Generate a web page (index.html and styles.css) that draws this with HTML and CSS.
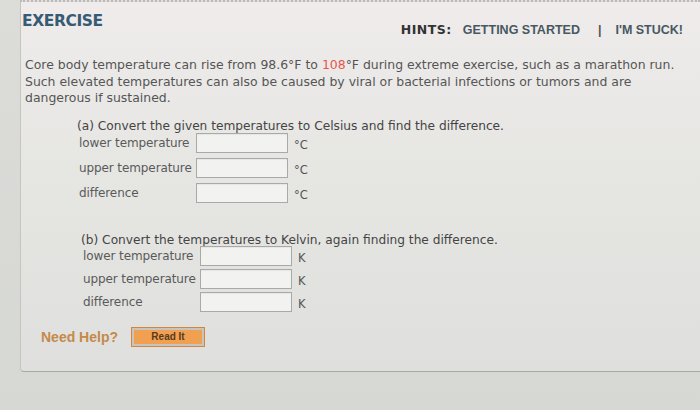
FILE: index.html
```html
<!DOCTYPE html>
<html>
<head>
<meta charset="utf-8">
<link rel="stylesheet" href="styles.css">
</head>
<body>
<div class="panel">
  <div class="topbar">
    <div class="title">EXERCISE</div>
    <div class="hints">
      <span class="hints-label">HINTS:</span>
      <span class="hint-link">GETTING STARTED</span>
      <span class="sep">|</span>
      <span class="hint-link">I'M STUCK!</span>
    </div>
  </div>
  <div class="intro">
    <div class="line">Core body temperature can rise from 98.6°F to <span class="red">108</span>°F during extreme exercise, such as a marathon run.</div>
    <div class="line">Such elevated temperatures can also be caused by viral or bacterial infections or tumors and are</div>
    <div class="line">dangerous if sustained.</div>
  </div>

  <div class="part part-a">
    <div class="q">(a) Convert the given temperatures to Celsius and find the difference.</div>
    <div class="rows">
      <div class="row"><span class="lbl">lower temperature</span><span class="box"></span><span class="unit">°C</span></div>
      <div class="row"><span class="lbl">upper temperature</span><span class="box"></span><span class="unit">°C</span></div>
      <div class="row"><span class="lbl">difference</span><span class="box"></span><span class="unit">°C</span></div>
    </div>
  </div>

  <div class="part part-b">
    <div class="q">(b) Convert the temperatures to Kelvin, again finding the difference.</div>
    <div class="rows rows-b">
      <div class="row"><span class="lbl">lower temperature</span><span class="box"></span><span class="unit">K</span></div>
      <div class="row"><span class="lbl">upper temperature</span><span class="box"></span><span class="unit">K</span></div>
      <div class="row"><span class="lbl">difference</span><span class="box"></span><span class="unit">K</span></div>
    </div>
  </div>

  <div class="help">
    <span class="need">Need Help?</span>
    <span class="readit">Read It</span>
  </div>
</div>
</body>
</html>
```
FILE: styles.css
```css
html, body {
  margin: 0;
  padding: 0;
}
body {
  width: 700px;
  height: 410px;
  overflow: hidden;
  background: linear-gradient(180deg, #dcdcd9 0%, #d6d8d4 100%);
  font-family: "DejaVu Sans", Verdana, sans-serif;
  color: #555555;
}
.panel {
  margin-left: 20px;
  height: 372px;
  box-sizing: border-box;
  border-left: 1px solid #c4c4c0;
  border-bottom: 1px solid #a8aaa6;
  border-top: 2px dotted #bdb9b8;
  border-bottom-left-radius: 4px;
  background: linear-gradient(180deg, #efeceb 0%, #e6e6e3 45%, #dfe0dd 100%);
  padding-top: 10px;
}
.topbar {
  display: flex;
  justify-content: space-between;
  align-items: flex-start;
  padding-right: 17px;
}
.title {
  margin-left: 1px;
  font-family: "DejaVu Sans", Verdana, sans-serif;
  font-weight: bold;
  font-size: 15.5px;
  color: #375a75;
  letter-spacing: -0.4px;
}
.hints {
  margin-top: 10px;
  display: flex;
  align-items: baseline;
  font-family: "Liberation Sans", Arial, sans-serif;
  font-size: 12.5px;
  font-weight: bold;
  color: #4b5a64;
}
.hints-label {
  font-family: "DejaVu Sans", Verdana, sans-serif;
  font-size: 12.5px;
  color: #333333;
  margin-right: 11px;
  letter-spacing: 0.5px;
}
.hint-link {
  color: #485862;
}
.sep {
  margin: 0 14px 0 18px;
  color: #555;
}
.intro {
  margin: 19px 0 0 4px;
  font-size: 12.45px;
  line-height: 17px;
  color: #555555;
  white-space: nowrap;
}
.line:last-child {
  margin-top: -1px;
}
.red {
  color: #e8554a;
}
.part {
  margin-left: 56px;
  font-size: 12.2px;
  color: #555;
}
.part-a {
  margin-top: 13px;
}
.part-b {
  margin-top: 30px;
  margin-left: 60px;
}
.q {
  color: #444;
  line-height: 14px;
  white-space: nowrap;
}
.rows {
  display: flex;
  flex-direction: column;
  gap: 5px;
  margin-left: 2px;
  margin-top: 0;
}
.rows-b {
  gap: 3px;
  margin-top: -1px;
}
.row {
  display: flex;
  align-items: center;
  height: 20px;
}
.lbl {
  width: 117px;
  flex-shrink: 0;
  white-space: nowrap;
  font-size: 12px;
  letter-spacing: -0.1px;
  color: #5a5a5a;
}
.box {
  flex-shrink: 0;
  width: 90px;
  height: 18px;
  border: 1px solid #a9aaa8;
  background: #f2f2f0;
  box-shadow: inset 0 1px 1px rgba(0,0,0,0.05);
}
.unit {
  margin-left: 6px;
  font-size: 11.5px;
  color: #555;
  position: relative;
  top: 2px;
}
.help {
  margin-top: 16px;
  margin-left: 20px;
  display: flex;
  align-items: center;
  gap: 14px;
}
.need {
  font-family: "Liberation Sans", Arial, sans-serif;
  font-weight: bold;
  font-size: 14px;
  color: #c48a4a;
}
.readit {
  width: 68px;
  height: 14px;
  border: 2px solid #c7c5c0;
  outline: 1px solid #d08540;
  background: #f0a050;
  font-family: "Liberation Sans", Arial, sans-serif;
  font-weight: bold;
  font-size: 10px;
  line-height: 14px;
  text-align: center;
  color: #5a3a1e;
}
```
